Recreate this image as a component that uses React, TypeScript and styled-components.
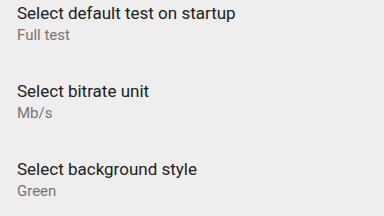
import React from 'react';
import styled, {createGlobalStyle} from 'styled-components';

const GlobalStyle = createGlobalStyle`
  html, body {
    margin: 0;
    padding: 0;
    background: #eeeeee;
  }
  body {
    font-family: Roboto, "Noto Sans", sans-serif;
  }
`

const List = styled.div`
  display: flex;
  flex-direction: column;
  width: 384px;
  height: 216px;
  overflow: hidden;
  background: #eeeeee;
`

const Row = styled.div`
  display: flex;
  flex-direction: column;
  flex-shrink: 0;
  height: 78px;
  padding: 2px 17px 0;
  box-sizing: border-box;
`

const Title = styled.div`
  font-size: 17px;
  line-height: 22px;
  color: #212121;
`

const Summary = styled.div`
  font-size: 15px;
  line-height: 18px;
  margin-top: 2px;
  color: #757575;
`

interface IPref {
    title: string,
    summary: string
}

const prefs: IPref[] = [
    {title: 'Select default test on startup', summary: 'Full test'},
    {title: 'Select bitrate unit', summary: 'Mb/s'},
    {title: 'Select background style', summary: 'Green'},
]

const App = () => {
    return (
        <>
            <GlobalStyle/>
            <List>
                {prefs.map((pref, index) => (
                    <Row key={index}>
                        <Title>{pref.title}</Title>
                        <Summary>{pref.summary}</Summary>
                    </Row>
                ))}
            </List>
        </>
    );
};

export default App;
